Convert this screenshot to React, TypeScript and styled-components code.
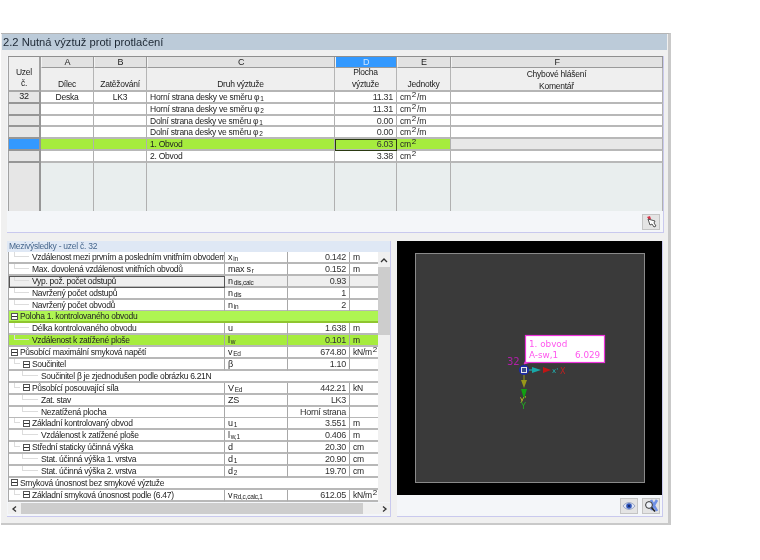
import React from "react";
import styled, { createGlobalStyle } from "styled-components";

const Global = createGlobalStyle`
  html, body { margin: 0; padding: 0; background: #fff; }
  * { box-sizing: border-box; }
  body { font-family: "Liberation Sans", Arial, sans-serif; font-size: 8.5px; letter-spacing: -0.25px; color: #222; }
`;

const Window = styled.div`
  width: 670px; height: 492px; margin: 33px 0 0 1px;
  background: #f0f0f0;
  border-top: 1px solid #b4b4b4; border-right: 3px solid #c9c9c9; border-bottom: 2px solid #c9c9c9;
  display: flex; flex-direction: column;
  filter: blur(0.35px);
`;
const TitleBar = styled.div`
  height: 16px; margin: 0 0 0 1px; width: 665px; background: #bccbd9;
  font-size: 11.2px; letter-spacing: 0; line-height: 16px; color: #1c2733; padding-left: 1px; flex: none;
`;
const TopPanel = styled.div`
  width: 657px; height: 177px; margin: 6px 0 0 6px; background: #f4f6f9;
  border: solid #c9c9ee; border-width: 0 1px 1px 0; flex: none;
  display: flex; flex-direction: column;
`;
const Sheet = styled.div`
  display: grid; margin-left: 1px; width: 655px; height: 155px; flex: none;
  grid-template-columns: 33px 53px 53px 188px 62px 54px 212px;
  grid-template-rows: 11px 24px repeat(6, 11.83px) 1fr;
  border-top: 1px solid #8f8f8f;
  background: #e9eeee;
`;
const Corner = styled.div`
  grid-row: span 2; background: #efefef; border-right: 2px solid #a2a2a2; border-bottom: 2px solid #a8a8a8;
  border-left: 1px solid #a2a2a2;
  text-align: center; line-height: 11px; padding-top: 10px;
`;
const Letter = styled.div<{ $active?: boolean }>`
  background: ${p => (p.$active ? "#3399ff" : "#e2e2e2")};
  color: ${p => (p.$active ? "#cfe6ff" : "#222")};
  border-right: 1px solid #9a9a9a; border-bottom: 1px solid #9a9a9a; border-left: 1px solid #f4f4f4;
  text-align: center; line-height: 10px; font-size: 9px;
`;
const HeadCell = styled.div`
  background: #efefef; border-right: 1px solid #b5b5b5; border-bottom: 2px solid #b5b5b5;
  display: flex; flex-direction: column; justify-content: flex-end; align-items: center;
  line-height: 12px;
`;
const HeadFull = styled(HeadCell)`
  justify-content: flex-start;
`;
const RowHead = styled.div<{ $active?: boolean }>`
  background: ${p => (p.$active ? "#3399ff" : "#e6e6e6")};
  border-left: 1px solid #a2a2a2; border-right: 2px solid #969696; border-bottom: 2px solid #969696;
  text-align: center; line-height: 9.5px; font-size: 9px;
`;
const Cell = styled.div<{ $bg?: string; $align?: string; $focus?: boolean }>`
  background: ${p => p.$bg || "#fff"};
  border-right: 1px solid #b0b0b0; border-bottom: 2px solid #b8b8b8;
  ${p => (p.$focus ? "outline: 1px solid #2b3a12; outline-offset: -1px;" : "")}
  text-align: ${p => p.$align || "left"};
  padding: 0 3px; line-height: 10px; white-space: nowrap;
`;
const Num = styled(Cell)`
  color: #333; text-align: right; font-size: 9px; letter-spacing: -0.3px;
`;
const Blank = styled.div<{ $head?: boolean }>`
  background: ${p => (p.$head ? "#e6e6e6" : "#e9eeee")};
  border-right: 1px solid #b0b0b0;
  ${p => (p.$head ? "border-left: 1px solid #a2a2a2; border-right: 2px solid #969696;" : "")}
`;
const Sub = styled.sub`
  font-size: 6.5px; line-height: 0; vertical-align: -1px; margin-left: 1px;
`;
const Sup = styled.sup`
  font-size: 8px; line-height: 0; vertical-align: 3px; margin: 0 1px;
`;
const SheetFooter = styled.div`
  flex: 1; display: flex; justify-content: flex-end; align-items: flex-start; padding: 3px 3px 0 0;
`;
const IconButton = styled.button`
  width: 18px; height: 16px; padding: 0; background: #e4e4e4;
  border: 1px solid #c4c4c4; display: flex; align-items: center; justify-content: center;
`;
const Lower = styled.div`
  display: flex; margin: 8px 0 0 6px; flex: none; height: 276px;
`;
const ResultPanel = styled.div`
  width: 384px; height: 276px; background: #f4f6f9; border-bottom: 1px solid #c9c9ee;
  border-right: 1px solid #c9c9ee; display: flex; flex-direction: column; margin-right: 6px;
`;
const ResultTitle = styled.div`
  height: 11px; flex: none; background: #dfe8f5; color: #46668c; line-height: 11px; padding-left: 2px;
`;
const ResultBody = styled.div`
  display: flex; height: 250px; flex: none; border-left: 1px solid #a8a8a8; margin-left: 1px;
`;
const Rows = styled.div`
  width: 370px; display: grid; grid-template-rows: repeat(21, 11.9px); align-content: start; background: #fff;
  flex: none;
`;
const Row = styled.div<{ $green?: boolean }>`
  display: grid; grid-template-columns: 216px 63px 62px 29px;
  background: ${p => (p.$green ? "#a6ec3e" : "#fff")};
`;
const TreeCell = styled.div<{ $span?: boolean; $bg?: string; $green?: boolean; $focus?: boolean }>`
  ${p => (p.$span ? "grid-column: 1 / -1;" : "")}
  display: flex; align-items: center; white-space: nowrap; overflow: hidden; letter-spacing: -0.3px;
  background: ${p => p.$bg || "transparent"};
  border-bottom: 2px solid ${p => (p.$green ? "#8fc52f" : "#b8b8b8")};
  ${p => (p.$span ? "" : "border-right: 1px solid #a8a8a8;")}
  ${p => (p.$focus ? "outline: 1px solid #555; outline-offset: -1px;" : "")}
`;
const Value = styled.div<{ $bg?: string }>`
  background: ${p => p.$bg || "transparent"};
  border-right: 1px solid #a8a8a8; border-bottom: 2px solid #b8b8b8;
  text-align: right; padding-right: 3px; line-height: 10px; font-size: 9px; letter-spacing: -0.3px; color: #333; white-space: nowrap;
`;
const Symbol = styled.div<{ $bg?: string }>`
  background: ${p => p.$bg || "transparent"};
  border-right: 1px solid #a8a8a8; border-bottom: 2px solid #b8b8b8;
  padding-left: 3px; line-height: 10px; white-space: nowrap; overflow: hidden; font-size: 9px;
`;
const UnitCell = styled(Symbol)`
  font-size: 8.5px; border-right: 0; overflow: visible;
`;
const Indent = styled.span<{ $w: number }>`
  width: ${p => p.$w}px; flex: none;
`;
const Branch = styled.span<{ $w: number }>`
  width: ${p => p.$w}px; height: 6px; margin-top: -6px; flex: none; margin-right: 3px;
  border-left: 1px solid #dcdcdc; border-bottom: 1px solid #dcdcdc;
`;
const Toggle = styled.span`
  width: 7px; height: 7px; flex: none; border: 1px solid #555; margin-right: 2px; background: #fff;
  display: flex; align-items: center; justify-content: center;
  &::before { content: ""; width: 5px; height: 1px; background: #333; }
`;
const VScroll = styled.div`
  width: 12px; flex: none; height: 250px; background: #f0f0f0; display: flex; flex-direction: column; align-items: center; margin-left: -1px;
`;
const ScrollArrow = styled.span`
  height: 15px; width: 100%; flex: none; display: flex; align-items: center; justify-content: center;
`;
const VThumb = styled.span`
  width: 100%; height: 68px; background: #cdcdcd; flex: none;
`;
const HScroll = styled.div`
  height: 11px; margin: 1px 0 0 1px; display: flex; background: #f0f0f0; flex: none;
`;
const HThumb = styled.span`
  width: 342px; background: #cdcdcd; flex: none;
`;
const HArrow = styled.span`
  width: 13px; flex: none; display: flex; align-items: center; justify-content: center;
`;
const Spacer = styled.span`
  flex: 1;
`;
const PreviewPanel = styled.div`
  width: 266px; height: 276px; display: flex; flex-direction: column; background: #f4f6f9;
  border-bottom: 1px solid #c9c9ee; border-right: 1px solid #c9c9ee;
`;
const Canvas = styled.div`
  width: 265px; height: 254px; background: #000; flex: none;
`;
const PreviewBar = styled.div`
  display: flex; justify-content: flex-end; gap: 4px; padding: 3px 2px 0 0;
`;

type Sym = React.ReactNode;
const s = (a: string, b?: string) => <>{a}{b ? <Sub>{b}</Sub> : null}</>;
const m2 = <>kN/m<Sup>2</Sup></>;

type R = {
  t: string; k: "leaf1" | "leaf2" | "g0" | "g1"; sym?: Sym; v?: string; u?: Sym; span?: boolean; green?: boolean; focus?: boolean;
};
const results: R[] = [
  { t: "Vzdálenost mezi prvním a posledním vnitřním obvoderr", k: "leaf1", sym: s("x", "in"), v: "0.142", u: "m" },
  { t: "Max. dovolená vzdálenost vnitřních obvodů", k: "leaf1", sym: s("max s", "r"), v: "0.152", u: "m" },
  { t: "Vyp. pož. počet odstupů", k: "leaf1", sym: s("n", "dis,calc"), v: "0.93", focus: true },
  { t: "Navržený počet odstupů", k: "leaf1", sym: s("n", "dis"), v: "1" },
  { t: "Navržený počet obvodů", k: "leaf1", sym: s("n", "in"), v: "2" },
  { t: "Poloha 1. kontrolovaného obvodu", k: "g0", span: true, green: true },
  { t: "Délka kontrolovaného obvodu", k: "leaf1", sym: "u", v: "1.638", u: "m" },
  { t: "Vzdálenost k zatížené ploše", k: "leaf1", sym: s("l", "w"), v: "0.101", u: "m", green: true },
  { t: "Působící maximální smyková napětí", k: "g0", sym: s("v", "Ed"), v: "674.80", u: m2 },
  { t: "Součinitel", k: "g1", sym: "β", v: "1.10" },
  { t: "Součinitel β je zjednodušen podle obrázku 6.21N", k: "leaf2", span: true },
  { t: "Působící posouvající síla", k: "g1", sym: s("V", "Ed"), v: "442.21", u: "kN" },
  { t: "Zat. stav", k: "leaf2", sym: "ZS", v: "LK3" },
  { t: "Nezatížená plocha", k: "leaf2", v: "Horní strana" },
  { t: "Základní kontrolovaný obvod", k: "g1", sym: s("u", "1"), v: "3.551", u: "m" },
  { t: "Vzdálenost k zatížené ploše", k: "leaf2", sym: s("l", "w,1"), v: "0.406", u: "m" },
  { t: "Střední staticky účinná výška", k: "g1", sym: "d", v: "20.30", u: "cm" },
  { t: "Stat. účinná výška 1. vrstva", k: "leaf2", sym: s("d", "1"), v: "20.90", u: "cm" },
  { t: "Stat. účinná výška 2. vrstva", k: "leaf2", sym: s("d", "2"), v: "19.70", u: "cm" },
  { t: "Smyková únosnost bez smykové výztuže", k: "g0", span: true },
  { t: "Základní smyková únosnost podle (6.47)", k: "g1", sym: s("v", "Rd,c,calc,1"), v: "612.05", u: m2 },
];

const Tree = ({ k }: { k: R["k"] }) => {
  if (k === "leaf1") return <><Indent $w={5} /><Branch $w={15} /></>;
  if (k === "leaf2") return <><Indent $w={13} /><Branch $w={16} /></>;
  if (k === "g0") return <><Indent $w={2} /><Toggle /></>;
  return <><Indent $w={5} /><Branch $w={6} /><Toggle /></>;
};

const cm2m = <>cm<Sup>2</Sup>/m</>;
const cm2 = <>cm<Sup>2</Sup></>;
const G = "#a6ec3e";
const sheetRows = [
  { h: "32", a: "Deska", b: "LK3", c: <>Horní strana desky ve směru φ<Sub>1</Sub></>, d: "11.31", e: cm2m },
  { c: <>Horní strana desky ve směru φ<Sub>2</Sub></>, d: "11.31", e: cm2m },
  { c: <>Dolní strana desky ve směru φ<Sub>1</Sub></>, d: "0.00", e: cm2m },
  { c: <>Dolní strana desky ve směru φ<Sub>2</Sub></>, d: "0.00", e: cm2m },
  { c: "1. Obvod", d: "6.03", e: cm2, active: true },
  { c: "2. Obvod", d: "3.38", e: cm2 },
];

const Arrow = ({ d }: { d: string }) => (
  <svg width="8" height="6" viewBox="0 0 8 6"><path d={d} fill="none" stroke="#333" strokeWidth="1.3" /></svg>
);

const PointerIcon = () => (
  <svg width="14" height="14" viewBox="0 0 14 14">
    <path d="M3 2l3-1 1 3-2 1z" fill="#d8344a" />
    <path d="M4 4l2 6 2-1 2 3 2-1-2-3 1-2z" fill="#fff" stroke="#444" strokeWidth="0.9" />
  </svg>
);
const EyeIcon = () => (
  <svg width="14" height="10" viewBox="0 0 14 10">
    <path d="M1 5c3-4.5 9-4.5 12 0-3 4.5-9 4.5-12 0z" fill="#dfe6f5" stroke="#7a88b0" strokeWidth="0.7" />
    <circle cx="7" cy="5" r="2.8" fill="#2f55b8" />
    <circle cx="7" cy="5" r="1.1" fill="#13235e" />
  </svg>
);
const ZoomIcon = () => (
  <svg width="16" height="15" viewBox="0 0 16 15">
    <path d="M8 1l6 11M14 1L8 11" stroke="#6f90e6" strokeWidth="2.6" />
    <circle cx="6" cy="6" r="3.4" fill="#eef2f8" stroke="#333" strokeWidth="1" />
    <path d="M8.6 8.6L12 12.5" stroke="#222" strokeWidth="1.6" />
  </svg>
);

const Plot = () => (
  <svg width="265" height="254" viewBox="0 0 265 254" letterSpacing="0">
    <rect x="18.5" y="12.5" width="229" height="229" fill="#3a3a3a" stroke="#8a8a8a" />
    <path d="M127 123l2-4 5 2z" fill="#fff" stroke="#ee22cc" strokeWidth="0.8" />
    <rect x="128.5" y="94.5" width="79" height="27" fill="#fff" stroke="#ee33dd" strokeWidth="1.2" />
    <text x="132" y="106" fontFamily="DejaVu Sans" fontSize="8.8" fill="#ff55ee">1. obvod</text>
    <text x="132" y="117" fontFamily="DejaVu Sans" fontSize="8.8" fill="#ff55ee">A-sw,1 <tspan x="178">6.029</tspan></text>
    <text x="110" y="124" fontFamily="DejaVu Sans" fontSize="10" fill="#b020a8">32</text>
    <line x1="127" y1="129" x2="127" y2="141" stroke="#9a9a10" strokeWidth="1" />
    <path d="M124 139h6l-3 8z" fill="#97971a" />
    <path d="M124 148h6l-3 10z" fill="#12a012" />
    <line x1="127" y1="129" x2="137" y2="129" stroke="#20a8a8" strokeWidth="1.2" />
    <path d="M135 126v6l9-3z" fill="#18a8a8" />
    <path d="M146 126v6l8-3z" fill="#c01515" />
    <circle cx="127" cy="129" r="5" fill="#1c2aa8" />
    <rect x="124.5" y="126.5" width="5" height="5" fill="#3a4a88" stroke="#e6e6e6" />
    <text x="155" y="132" fontFamily="DejaVu Sans" fontSize="7" fill="#20b8b8">x'</text>
    <text x="163" y="133" fontFamily="DejaVu Sans" fontSize="8" fill="#c02020">X</text>
    <text x="123" y="160" fontFamily="DejaVu Sans" fontSize="7" fill="#d8d820">y'</text>
    <text x="124" y="168" fontFamily="DejaVu Sans" fontSize="8" fill="#20b020">Y</text>
  </svg>
);

export default function App() {
  return (
    <>
      <Global />
      <Window>
        <TitleBar>2.2 Nutná výztuž proti protlačení</TitleBar>
        <TopPanel>
          <Sheet>
            <Corner>Uzel<br />č.</Corner>
            <Letter>A</Letter><Letter>B</Letter><Letter>C</Letter>
            <Letter $active>D</Letter><Letter>E</Letter><Letter>F</Letter>
            <HeadCell>Dílec</HeadCell>
            <HeadCell>Zatěžování</HeadCell>
            <HeadCell>Druh výztuže</HeadCell>
            <HeadCell><span>Plocha</span><span>výztuže</span></HeadCell>
            <HeadCell>Jednotky</HeadCell>
            <HeadFull><span>Chybové hlášení</span><span>Komentář</span></HeadFull>
            {sheetRows.map((r, i) => {
              const bg = r.active ? G : undefined;
              return (
                <React.Fragment key={i}>
                  <RowHead $active={r.active}>{r.h}</RowHead>
                  <Cell $bg={bg} $align="center">{r.a}</Cell>
                  <Cell $bg={bg} $align="center">{r.b}</Cell>
                  <Cell $bg={bg}>{r.c}</Cell>
                  <Num $bg={bg} $focus={r.active}>{r.d}</Num>
                  <Cell $bg={bg}>{r.e}</Cell>
                  <Cell $bg={r.active ? "#e8e8e8" : undefined} />
                </React.Fragment>
              );
            })}
            <Blank $head /><Blank /><Blank /><Blank /><Blank /><Blank /><Blank />
          </Sheet>
          <SheetFooter>
            <IconButton aria-label="Vybrat"><PointerIcon /></IconButton>
          </SheetFooter>
        </TopPanel>
        <Lower>
          <ResultPanel>
            <ResultTitle>Mezivýsledky - uzel č. 32</ResultTitle>
            <ResultBody>
              <Rows>
                {results.map((r, i) => {
                  const bg = r.green ? G : r.focus ? "#efefef" : undefined;
                  return (
                    <Row key={i} $green={r.green && r.span}>
                      <TreeCell $span={r.span} $bg={r.span && r.green ? "#aef552" : bg} $green={r.green && r.span} $focus={r.focus}>
                        <Tree k={r.k} />
                        <span>{r.t}</span>
                      </TreeCell>
                      {!r.span && (
                        <>
                          <Symbol $bg={bg}>{r.sym}</Symbol>
                          <Value $bg={bg}>{r.v}</Value>
                          <UnitCell $bg={bg}>{r.u}</UnitCell>
                        </>
                      )}
                    </Row>
                  );
                })}
              </Rows>
              <VScroll>
                <ScrollArrow><Arrow d="M1 5l3-3 3 3" /></ScrollArrow>
                <VThumb />
              </VScroll>
            </ResultBody>
            <HScroll>
              <HArrow><Arrow d="M5 0.5L2 3l3 2.5" /></HArrow>
              <HThumb />
              <Spacer />
              <HArrow><Arrow d="M3 0.5L6 3l-3 2.5" /></HArrow>
            </HScroll>
          </ResultPanel>
          <PreviewPanel>
            <Canvas><Plot /></Canvas>
            <PreviewBar>
              <IconButton aria-label="Zobrazit"><EyeIcon /></IconButton>
              <IconButton aria-label="Přiblížit"><ZoomIcon /></IconButton>
            </PreviewBar>
          </PreviewPanel>
        </Lower>
      </Window>
    </>
  );
}
